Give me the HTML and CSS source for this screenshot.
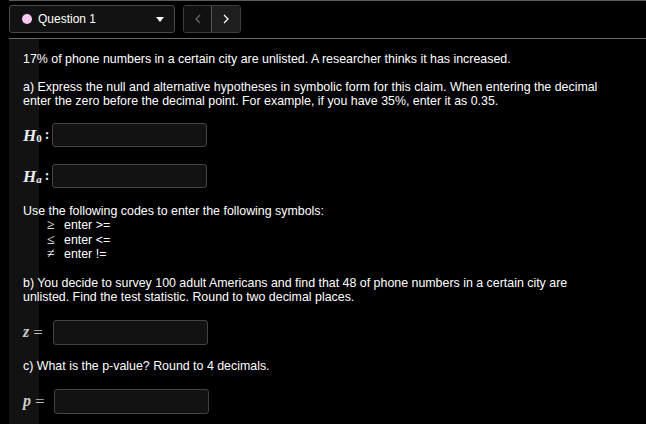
FILE: index.html
```html
<!DOCTYPE html>
<html lang="en">
<head>
  <meta charset="UTF-8">
  <title>Question 1</title>
  <link rel="stylesheet" href="styles.css">
</head>
<body>
  <div class="page">
    <div class="toolbar">
      <div class="question-select">
        <span class="dot"></span>
        <span class="select-label">Question 1</span>
        <span class="caret"></span>
      </div>
      <div class="nav">
        <button class="nav-btn prev" type="button">
          <svg width="6" height="10" viewBox="0 0 6 10"><path d="M5 1 1 5l4 4" fill="none" stroke="currentColor" stroke-width="1.3"/></svg>
        </button>
        <button class="nav-btn next" type="button">
          <svg width="6" height="10" viewBox="0 0 6 10"><path d="M1 1l4 4-4 4" fill="none" stroke="currentColor" stroke-width="1.3"/></svg>
        </button>
      </div>
    </div>

    <div class="content">
      <p class="intro">17% of phone numbers in a certain city are unlisted. A researcher thinks it has increased.</p>

      <p class="part">a) Express the null and alternative hypotheses in symbolic form for this claim. When entering the decimal enter the zero before the decimal point. For example, if you have 35%, enter it as 0.35.</p>

      <div class="answer-row first">
        <span class="math-label"><i>H</i><sub>0</sub><span class="colon">:</span></span>
        <input class="answer" type="text">
      </div>
      <div class="answer-row">
        <span class="math-label"><i>H</i><sub><i>a</i></sub><span class="colon">:</span></span>
        <input class="answer" type="text">
      </div>

      <div class="codes">
        <p>Use the following codes to enter the following symbols:</p>
        <ul>
          <li><span class="sym">&ge;</span>enter &gt;=</li>
          <li><span class="sym">&le;</span>enter &lt;=</li>
          <li><span class="sym">&ne;</span>enter !=</li>
        </ul>
      </div>

      <p class="part">b) You decide to survey 100 adult Americans and find that 48 of phone numbers in a certain city are unlisted. Find the test statistic. Round to two decimal places.</p>

      <div class="answer-row eq">
        <span class="math-label"><i>z</i><span class="eq-sign">=</span></span>
        <input class="answer" type="text">
      </div>

      <p class="part">c) What is the p-value? Round to 4 decimals.</p>

      <div class="answer-row eq last">
        <span class="math-label"><i>p</i><span class="eq-sign">=</span></span>
        <input class="answer" type="text">
      </div>
    </div>
  </div>
</body>
</html>
```

FILE: styles.css
```css
* {
  box-sizing: border-box;
}

body {
  margin: 0;
  background: #000;
  color: #fff;
  font-family: "Liberation Sans", Arial, sans-serif;
  font-size: 12.4px;
  line-height: 14px;
}

.page {
  margin-left: 9px;
  border-top: 1px solid #5a5a5a;
}

/* top bar */
.toolbar {
  display: flex;
  align-items: center;
  gap: 8px;
  padding: 4px 0 5px;
  border-bottom: 1px solid #6a6a6a;
}

.question-select {
  display: flex;
  align-items: center;
  width: 166px;
  height: 28px;
  padding: 0 10px 0 12px;
  background: #121212;
  border: 1px solid #4a4a4a;
  border-radius: 3px;
}

.dot {
  width: 10px;
  height: 10px;
  border-radius: 50%;
  background: #fbc8f6;
  margin-right: 6px;
}

.select-label {
  flex: 1;
  font-size: 12px;
}

.caret {
  width: 0;
  height: 0;
  border-left: 4px solid transparent;
  border-right: 4px solid transparent;
  border-top: 5px solid #fff;
}

.nav {
  display: flex;
  height: 28px;
  border: 1px solid #3e3e3e;
  border-radius: 3px;
  overflow: hidden;
}

.nav-btn {
  display: flex;
  align-items: center;
  justify-content: center;
  width: 28px;
  padding: 0;
  border: 0;
  color: #fff;
  background: #1e1e1e;
}

.nav-btn.prev {
  width: 28px;
  color: #666;
  background: #111;
  border-right: 1px solid #555;
}

/* question area */
.content {
  padding: 13px 40px 20px 14px;
  background: linear-gradient(to right, #121212 30px, #000 30px);
  min-height: 400px;
}

.content p {
  margin: 0;
}

.content .part {
  margin-top: 14px;
}

.answer-row {
  display: flex;
  align-items: center;
  height: 24px;
  margin-top: 17px;
}

.answer-row.first {
  margin-top: 15px;
}

.answer-row.eq {
  height: 25px;
  margin-top: 16px;
}

.answer-row.last {
  margin-top: 16px;
}

.math-label {
  width: 29px;
  height: 100%;
  display: flex;
  align-items: center;
  font-family: "Liberation Serif", "Times New Roman", serif;
  font-weight: bold;
  font-size: 17px;
  line-height: 1;
  color: #eee;
}

.math-label sub {
  font-size: 11px;
  font-style: normal;
  position: relative;
  top: 3px;
}

.colon {
  margin-left: 3px;
  font-size: 14px;
}

.answer-row.eq .math-label {
  width: 30px;
  font-size: 16px;
  color: #ccc;
}

.answer-row.last .math-label {
  width: 31px;
}

.eq-sign {
  margin-left: 4px;
  font-weight: normal;
  font-size: 17px;
  color: #bbb;
}

.answer {
  width: 155px;
  height: 100%;
  background: #121212;
  border: 1px solid #444;
  border-radius: 3px;
  color: #fff;
}

.codes {
  margin-top: 16px;
}

.codes ul {
  list-style: none;
  margin: 0;
  padding-left: 24px;
}

.codes li {
  display: flex;
  align-items: center;
  height: 14.5px;
}

.sym {
  width: 17px;
  font-family: "Liberation Serif", "Times New Roman", serif;
  font-size: 14px;
  line-height: 14px;
}
```
